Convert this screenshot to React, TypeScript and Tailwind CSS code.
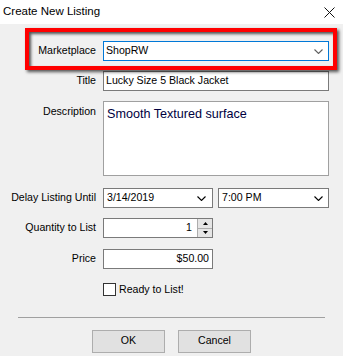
import { ReactNode } from "react"

function Chevron({ color = "#000" }: { color?: string }) {
  return (
    <svg width="9" height="5" viewBox="0 0 9 5" className="shrink-0">
      <path d="M0.5 0.5 L4.5 4.5 L8.5 0.5" fill="none" stroke={color} strokeWidth="1.1" />
    </svg>
  )
}

function Row({ label, children, className = "", top = false }: { label: string; children: ReactNode; className?: string; top?: boolean }) {
  return (
    <div className={`flex ${top ? "items-start" : "items-center"} ${className}`}>
      <div className={`w-[96px] shrink-0 text-right whitespace-nowrap ${top ? "pt-[3px]" : ""}`}>{label}</div>
      <div className="ml-[7px] flex">{children}</div>
    </div>
  )
}

export default function App() {
  return (
    <div className="w-[343px] h-[356px] bg-[#f0f0f0] overflow-hidden text-[10.6px] text-black font-['Liberation_Sans',Arial,sans-serif]">
      {/* title bar */}
      <div className="h-[24px] bg-white flex items-center justify-between pl-[3px] pr-[8px]">
        <span className="text-[11.5px]">Create New Listing</span>
        <svg width="11" height="11" viewBox="0 0 11 11">
          <path d="M0.5 0.5 L10.5 10.5 M10.5 0.5 L0.5 10.5" stroke="#111" strokeWidth="1" />
        </svg>
      </div>

      <div className="pt-[17px]">
        <div className="relative">
          <Row label="Marketplace">
            <div className="w-[226px] h-[20px] border border-[#0078d7] bg-white flex items-center justify-between pl-[2px] pr-[5px]">
              <span>ShopRW</span>
              <Chevron color="#606060" />
            </div>
          </Row>
          <div className="absolute left-[25px] top-[-13px] w-[312px] h-[42px] border-[4px] border-[#ff0000] pointer-events-none shadow-[2px_2px_3px_rgba(0,0,0,0.65),inset_2px_2px_3px_rgba(0,0,0,0.65)]" />
        </div>

        <Row label="Title" className="mt-[10px]">
          <div className="w-[226px] h-[20px] border border-[#7a7a7a] bg-white flex items-center pl-[2px]">
            Lucky Size 5 Black Jacket
          </div>
        </Row>

        <Row label="Description" className="mt-[10px]" top>
          <div className="w-[226px] h-[75px] border border-[#a0a0a0] bg-white pl-[3px] pt-[3px] text-[12.6px] text-[#000040]">
            Smooth Textured surface
          </div>
        </Row>

        <Row label="Delay Listing Until" className="mt-[12px]">
          <div className="w-[110px] h-[20px] border border-[#7a7a7a] bg-white flex items-center justify-between pl-[3px] pr-[6px]">
            <span>3/14/2019</span>
            <Chevron />
          </div>
          <div className="ml-[5px] w-[111px] h-[20px] border border-[#7a7a7a] bg-white flex items-center justify-between pl-[3px] pr-[5px]">
            <span>7:00 PM</span>
            <Chevron />
          </div>
        </Row>

        <Row label="Quantity to List" className="mt-[10px]">
          <div className="w-[110px] h-[20px] border border-[#7a7a7a] bg-white flex items-center justify-end">
            <span className="pr-[5px]">1</span>
            <div className="w-[15px] h-full flex flex-col border-l border-[#adadad]">
              <div className="flex-1 bg-[#e5e5e5] border-b border-[#adadad] flex items-center justify-center">
                <svg width="5" height="3" viewBox="0 0 5 3"><path d="M0 3 L2.5 0 L5 3 Z" fill="#000" /></svg>
              </div>
              <div className="flex-1 bg-[#e5e5e5] flex items-center justify-center">
                <svg width="5" height="3" viewBox="0 0 5 3"><path d="M0 0 L2.5 3 L5 0 Z" fill="#000" /></svg>
              </div>
            </div>
          </div>
        </Row>

        <Row label="Price" className="mt-[11px]">
          <div className="w-[110px] h-[20px] border border-[#7a7a7a] bg-white flex items-center justify-end pr-[3px]">
            $50.00
          </div>
        </Row>

        <div className="mt-[13px] flex items-center pl-[103px]">
          <div className="w-[13px] h-[13px] border border-[#333] bg-white" />
          <span className="ml-[3px]">Ready to List!</span>
        </div>

        <div className="mt-[19px] ml-[18px] w-[307px] border-t border-[#a0a0a0]" />

        <div className="mt-[12px] flex justify-center gap-[13px]">
          <button className="w-[73px] h-[23px] bg-[#e1e1e1] border border-[#adadad] text-[10.6px]">OK</button>
          <button className="w-[73px] h-[23px] bg-[#e1e1e1] border border-[#adadad] text-[10.6px]">Cancel</button>
        </div>
      </div>
    </div>
  )
}
